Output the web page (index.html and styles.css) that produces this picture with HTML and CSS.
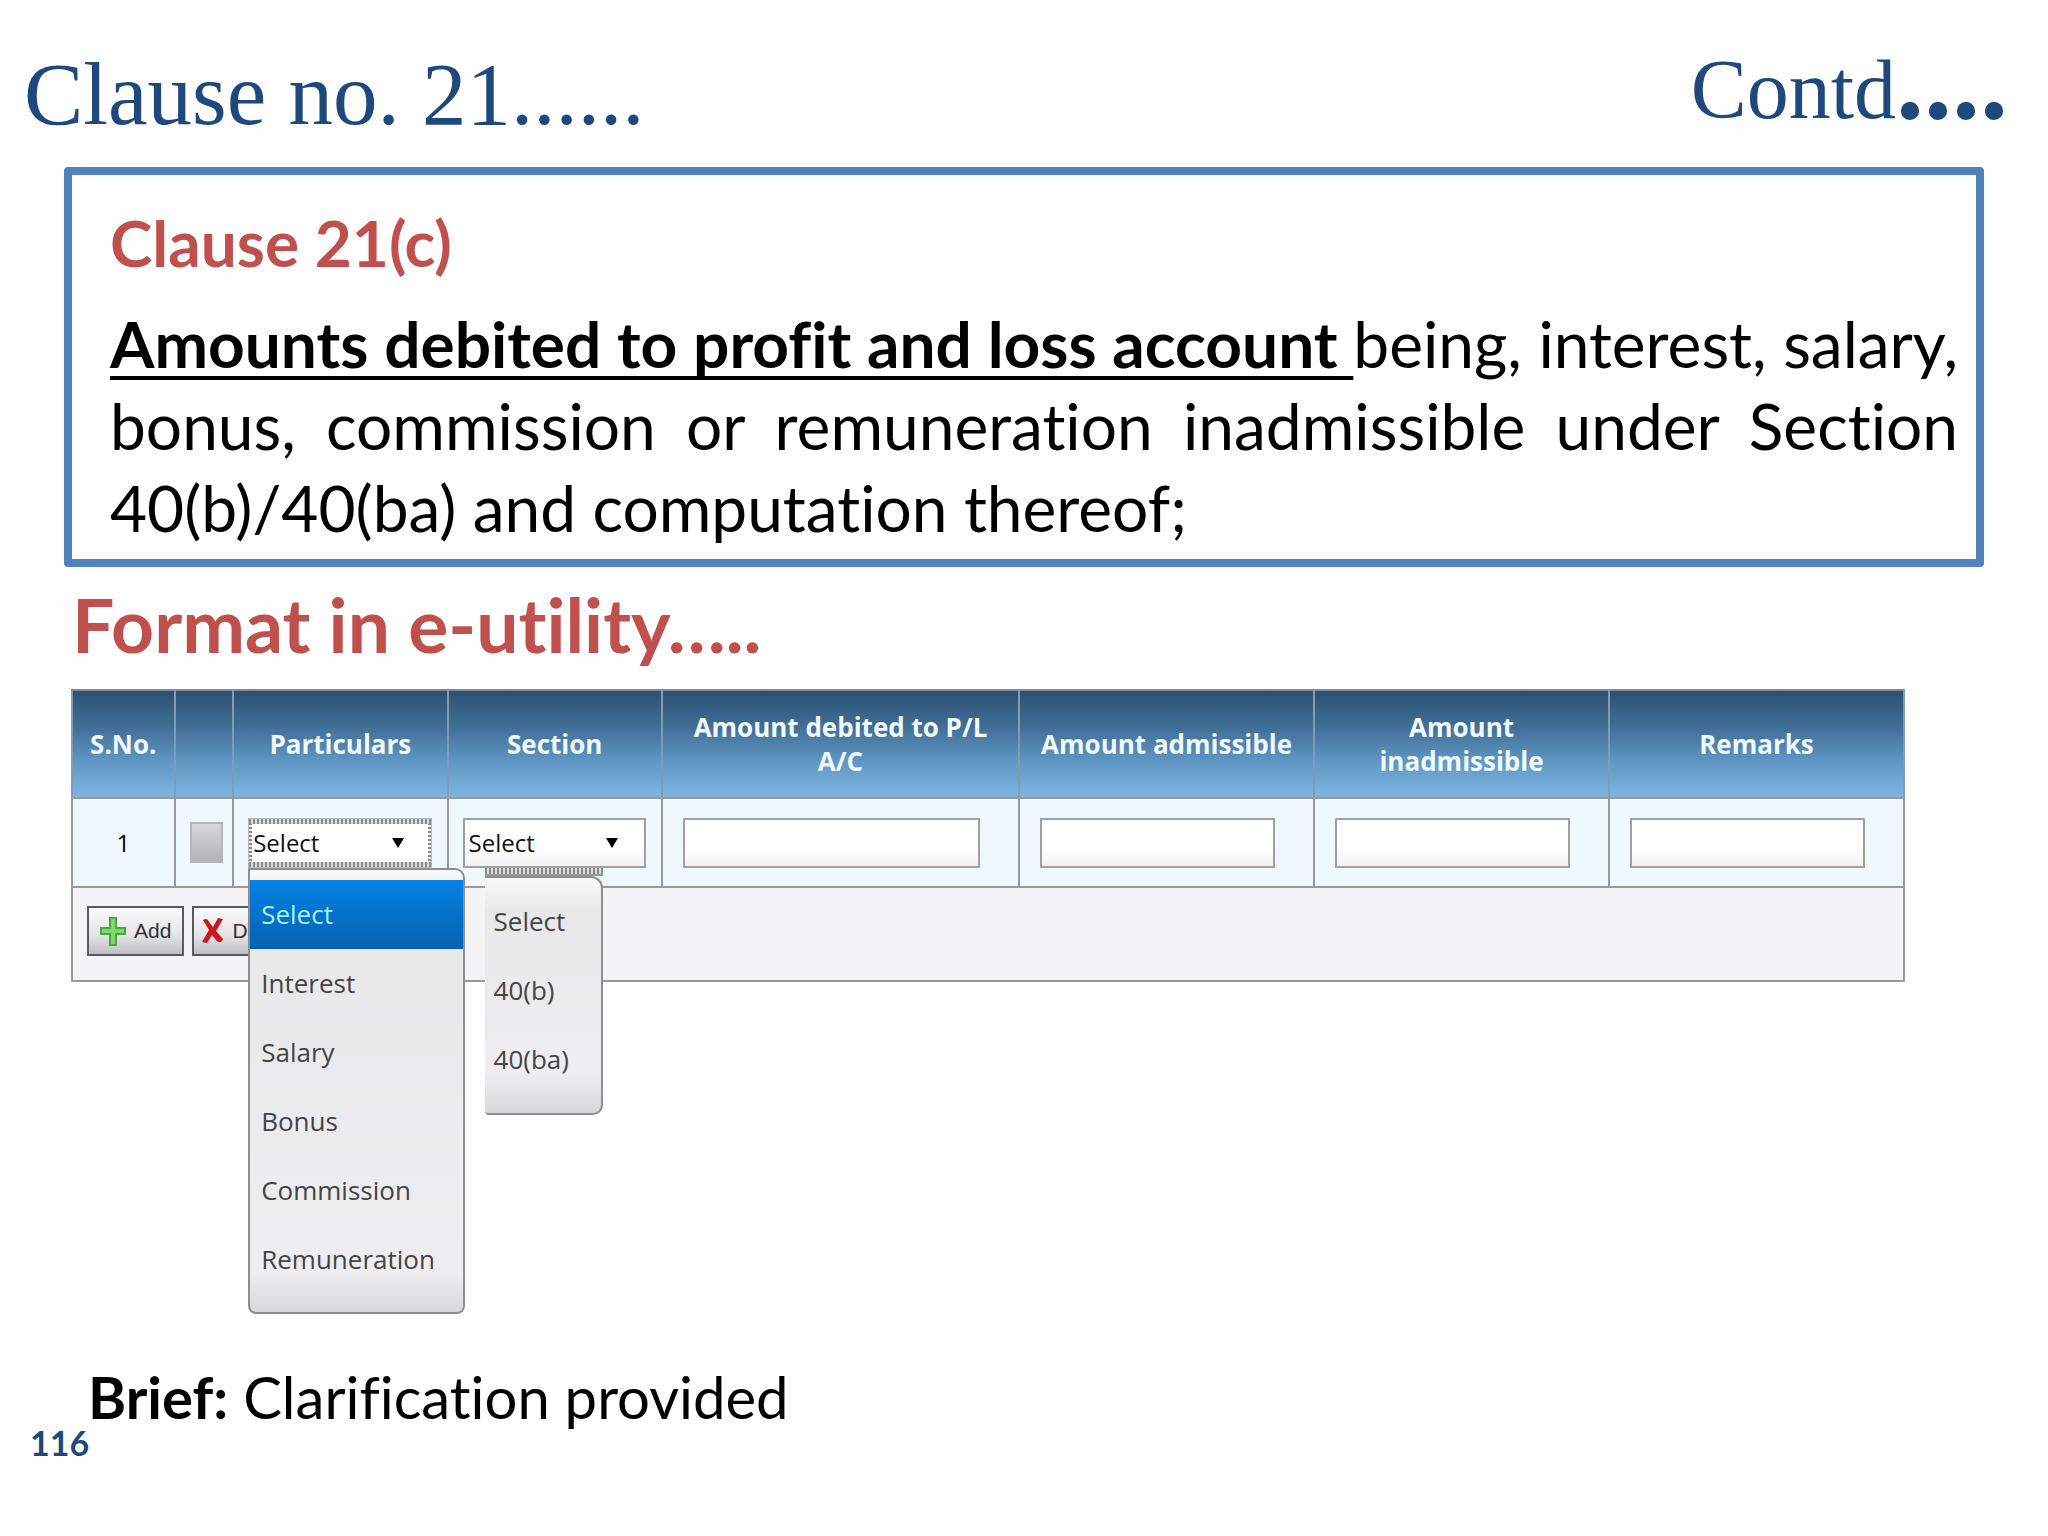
FILE: index.html
```
<!DOCTYPE html>
<html lang="en">
<head>
    <meta charset="UTF-8" />
    <meta name="viewport" content="width=device-width, initial-scale=1.0" />
    <title>Clause no. 21</title>
    <link rel="stylesheet" href="styles.css">
</head>
<body>
    <header class="slide-header">
        <h1 class="title">Clause no. 21......</h1>
        <p class="contd">Contd<b class="dots">....</b></p>
    </header>

    <section class="clause-box">
        <h2 class="clause-heading">Clause 21(c)</h2>
        <p class="clause-text"><strong>Amounts debited to profit and loss account </strong>being, interest, salary, bonus, commission or remuneration inadmissible under Section 40(b)/40(ba) and computation thereof;</p>
    </section>

    <h2 class="format-heading">Format in e-utility…..</h2>

    <table class="utility">
        <colgroup>
            <col class="col-sno">
            <col class="col-check">
            <col class="col-select">
            <col class="col-select">
            <col class="col-debited">
            <col class="col-amount">
            <col class="col-amount">
            <col class="col-amount">
        </colgroup>
        <thead>
            <tr>
                <th>S.No.</th>
                <th></th>
                <th>Particulars</th>
                <th>Section</th>
                <th>Amount debited to P/L A/C</th>
                <th>Amount admissible</th>
                <th>Amount inadmissible</th>
                <th>Remarks</th>
            </tr>
        </thead>
        <tbody>
            <tr>
                <td class="number">1</td>
                <td class="check-cell"><input class="check" type="checkbox" aria-label="Select row 1"></td>
                <td class="select-cell">
                    <div class="dropdown">
                        <select class="select focused" aria-label="Particulars">
                            <option>Select</option>
                            <option>Interest</option>
                            <option>Salary</option>
                            <option>Bonus</option>
                            <option>Commission</option>
                            <option>Remuneration</option>
                        </select>
                        <svg class="arrow" viewBox="0 0 12 10"><path d="M0 0h12L6 10z"/></svg>
                        <ul class="menu menu-particulars">
                            <li class="selected">Select</li>
                            <li>Interest</li>
                            <li>Salary</li>
                            <li>Bonus</li>
                            <li>Commission</li>
                            <li>Remuneration</li>
                        </ul>
                    </div>
                </td>
                <td class="select-cell">
                    <div class="dropdown">
                        <select class="select" aria-label="Section">
                            <option>Select</option>
                            <option>40(b)</option>
                            <option>40(ba)</option>
                        </select>
                        <svg class="arrow" viewBox="0 0 12 10"><path d="M0 0h12L6 10z"/></svg>
                        <div class="section-popup">
                            <div class="hatch"></div>
                            <ul class="menu menu-section">
                                <li>Select</li>
                                <li>40(b)</li>
                                <li>40(ba)</li>
                            </ul>
                        </div>
                    </div>
                </td>
                <td><input class="field" type="text" aria-label="Amount debited to P/L A/C"></td>
                <td><input class="field" type="text" aria-label="Amount admissible"></td>
                <td><input class="field" type="text" aria-label="Amount inadmissible"></td>
                <td><input class="field" type="text" aria-label="Remarks"></td>
            </tr>
        </tbody>
        <tfoot>
            <tr>
                <td colspan="8">
                    <div class="actions">
                        <button class="action" type="button">
                            <svg class="icon" viewBox="0 0 26 32"><path d="M10 3h6v10h9v6h-9v11h-6V19H1v-6h9z" fill="#7ddb6b" stroke="#4aa545" stroke-width="2"/></svg>
                            Add
                        </button>
                        <button class="action" type="button">
                            <svg class="icon icon-delete" viewBox="0 0 22 32"><path d="M1 5c3-2 5-1 6 2l4 5 5-9 5 1-7 12 7 8c-1 4-5 4-7 1l-4-5-5 8-5-1 7-12z" fill="#cf1420"/></svg>
                            Delete
                        </button>
                    </div>
                </td>
            </tr>
        </tfoot>
    </table>

    <p class="brief"><b>Brief:</b> Clarification provided</p>
    <footer class="page-number">116</footer>
</body>
</html>
```
FILE: styles.css
```
* {
    box-sizing: border-box;
}
body {
    margin: 0;
    background-color: #fefefe;
    color: #000;
    font-family: Lato, sans-serif;
    font-variant-ligatures: none;
}
h1, h2, p, ul {
    margin: 0;
    padding: 0;
}
.slide-header {
    display: flex;
    justify-content: space-between;
    align-items: flex-start;
    padding: 42px 40px 0 24px;
    color: #1f497d;
    font-family: "Liberation Serif", serif;
}
.title {
    font-size: 89px;
    line-height: 104px;
    font-weight: normal;
}
.contd {
    font-size: 84px;
    line-height: 96px;
}
.dots {
    font-size: 112px;
    line-height: 0;
}
.clause-box {
    margin: 21px 64px 0;
    padding: 28px 18px 10px 38px;
    border: 8px solid #4f81bd;
    border-radius: 4px;
}
.clause-heading {
    margin-bottom: 20px;
    color: #c0504d;
    font-size: 64px;
    line-height: 80px;
}
.clause-text {
    font-size: 64px;
    line-height: 82px;
    text-align: justify;
}
.clause-text strong {
    text-decoration: underline;
    text-decoration-thickness: 4px;
    text-underline-offset: 8px;
    text-decoration-skip-ink: none;
}
.format-heading {
    margin: 17px 72px 25px;
    color: #c0504d;
    font-size: 75px;
    line-height: 80px;
}

/* e-utility grid */
.utility {
    width: calc(100% - 214px);
    margin-left: 71px;
    border-collapse: collapse;
    table-layout: fixed;
    font-family: "Open Sans", sans-serif;
    font-size: 24px;
}
.col-sno {
    width: 5.6%;
}
.col-check {
    width: 3.2%;
}
.col-select {
    width: 11.7%;
}
.col-debited {
    width: 19.5%;
}
.col-amount {
    width: 16.1%;
}
.utility th, .utility td {
    border: 2px solid #999;
}
.utility th {
    height: 108px;
    padding: 0 16px;
    border-top-color: #7d8b94;
    border-left-color: #7f9cb2;
    border-right-color: #7f9cb2;
    color: #f0faff;
    font-size: 26px;
    line-height: 34px;
}
.utility thead {
    background: linear-gradient(#2a506e, #426f98 35%, #639bc8 70%, #81b5e0);
}
.utility th:first-child {
    padding: 0;
}
.utility td {
    height: 89px;
    padding: 0 38px 0 20px;
    background-color: #f1f7fe;
}
.utility .number {
    padding: 0;
    text-align: center;
}
.utility .check-cell {
    padding: 0 12px 0 14px;
}
.utility .select-cell {
    padding: 0 15px 0 14px;
}
.check {
    appearance: none;
    display: block;
    width: 33px;
    height: 41px;
    margin: 0;
    border: 2px solid #b5b5b8;
    background: linear-gradient(#d8d8da, #b4b4b6);
}
.field {
    display: block;
    width: 100%;
    height: 50px;
    border: 2px solid #a0a0a0;
    background: linear-gradient(#fff 60%, #f2f2f2);
}
.dropdown {
    position: relative;
}
.select {
    appearance: none;
    display: block;
    width: 100%;
    height: 50px;
    padding: 0 4px;
    border: 2px solid #a0a0a0;
    border-radius: 0;
    background: linear-gradient(#fff 60%, #f2f2f2);
    color: #111;
    font-family: inherit;
    font-size: 24px;
}
.focused {
    border: 1px solid #bbb;
    background:
        repeating-linear-gradient(90deg, #888 0 2px, #ddd 2px 4px) top / 100% 5px no-repeat,
        repeating-linear-gradient(90deg, #888 0 2px, #ddd 2px 4px) bottom / 100% 5px no-repeat,
        repeating-linear-gradient(#888 0 2px, #eee 2px 4px) left / 3px 100% no-repeat,
        repeating-linear-gradient(#888 0 2px, #eee 2px 4px) right / 3px 100% no-repeat,
        #fff;
}
.arrow {
    position: absolute;
    top: 20px;
    right: 28px;
    width: 12px;
    height: 10px;
    pointer-events: none;
}
.menu {
    list-style: none;
    border: 2px solid #8e8e90;
    background: linear-gradient(#fafafa, #e8e8e9 32px, #eeeef0 calc(100% - 40px), #d8d8da);
    color: #444;
    font-size: 26px;
    line-height: 69px;
}
.menu-particulars {
    position: absolute;
    z-index: 2;
    top: 50px;
    left: 0;
    width: 217px;
    height: 446px;
    padding-top: 10px;
    border-radius: 0 10px 8px 8px;
}
.menu-particulars li {
    padding-left: 11px;
}
.menu-particulars .selected {
    background: linear-gradient(#0583e4, #0660b0);
    color: #a5f0ff;
}
.section-popup {
    position: absolute;
    z-index: 1;
    top: 50px;
    left: 22px;
    width: 118px;
}
.hatch {
    height: 8px;
    border-bottom: 2px solid #999;
    background: repeating-linear-gradient(90deg, #888 0 2px, #ddd 2px 4px);
}
.menu-section {
    height: 239px;
    padding: 9px 0 0 9px;
    border-left: 0;
    border-radius: 0 12px 10px 4px;
}
.utility tfoot td {
    height: 94px;
    padding: 18px 14px 0;
    background-color: #f4f4f6;
    vertical-align: top;
}
.actions {
    display: flex;
    gap: 8px;
}
.action {
    display: flex;
    align-items: center;
    gap: 8px;
    height: 50px;
    padding: 0 11px;
    border: 2px solid #555b62;
    background: linear-gradient(#fbfbfb, #e4e4e6 60%, #bfbfc3);
    color: #333;
    font-family: "Liberation Sans", sans-serif;
    font-size: 21px;
}
.action:last-child {
    padding-left: 8px;
}
.icon {
    width: 26px;
    height: 32px;
}
.icon-delete {
    width: 22px;
}

.brief {
    margin: 385px 88px 0;
    font-size: 58px;
    line-height: 60px;
}
.page-number {
    margin-left: 30px;
    color: #1f497d;
    font-size: 34px;
    font-weight: bold;
    line-height: 32px;
}
```
